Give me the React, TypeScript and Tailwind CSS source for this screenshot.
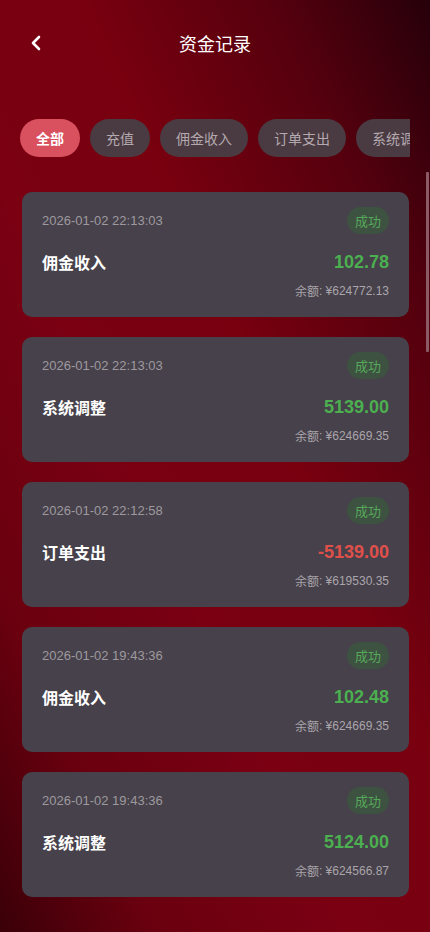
import React from "react";

type Rec = { time: string; title: string; amount: string; neg?: boolean; balance: string };

const records: Rec[] = [
  { time: "2026-01-02 22:13:03", title: "佣金收入", amount: "102.78", balance: "¥624772.13" },
  { time: "2026-01-02 22:13:03", title: "系统调整", amount: "5139.00", balance: "¥624669.35" },
  { time: "2026-01-02 22:12:58", title: "订单支出", amount: "-5139.00", neg: true, balance: "¥619530.35" },
  { time: "2026-01-02 19:43:36", title: "佣金收入", amount: "102.48", balance: "¥624669.35" },
  { time: "2026-01-02 19:43:36", title: "系统调整", amount: "5124.00", balance: "¥624566.87" },
];

const tabs = ["全部", "充值", "佣金收入", "订单支出", "系统调整"];

export default function App() {
  return (
    <div
      className="relative w-[430px] h-[932px] overflow-hidden bg-[linear-gradient(to_bottom_left,#26000a_0%,#55000e_18%,#78000f_40%,#7a0012_60%,#6a000f_82%,#3a0008_100%)]"
      style={{ fontFamily: '"Liberation Sans", Arial, "Noto Sans CJK SC", sans-serif' }}
    >
      {/* header */}
      <div className="relative h-[86px] flex items-center justify-center">
        <button className="absolute left-[26px] top-[33px] w-[20px] h-[20px] flex items-center justify-center">
          <svg width="12" height="16" viewBox="0 0 12 16" fill="none">
            <path d="M9 2L3 8L9 14" stroke="#ffffff" strokeWidth="2.6" strokeLinecap="round" strokeLinejoin="round" />
          </svg>
        </button>
        <div className="text-[18px] text-white" style={{ fontFamily: '"Noto Sans CJK SC", sans-serif' }}>
          资金记录
        </div>
      </div>

      {/* tabs */}
      <div className="mt-[33px] mx-[20px] overflow-hidden">
        <div className="flex gap-[10px] whitespace-nowrap">
          {tabs.map((t, i) => (
            <div
              key={t}
              className={
                i === 0
                  ? "shrink-0 h-[38px] px-[16px] rounded-full flex items-center text-[14px] font-bold text-white bg-[#d9505f]"
                  : "shrink-0 h-[38px] px-[16px] rounded-full flex items-center text-[14px] text-[#b3a9ae] bg-[#4a3a42]"
              }
              style={{ fontFamily: '"Noto Sans CJK SC", sans-serif' }}
            >
              {t}
            </div>
          ))}
        </div>
      </div>

      {/* list */}
      <div className="mt-[35px] ml-[22px] mr-[21px] flex flex-col gap-[20px]">
        {records.map((r, i) => (
          <div key={i} className="rounded-[10px] bg-[#46414a] px-[20px] pt-[15px] pb-[17px]">
            <div className="h-[27px] flex items-center justify-between">
              <span className="text-[13px] text-[#9e999f]">{r.time}</span>
              <span
                className="h-[27px] px-[8px] rounded-full flex items-center text-[13px] text-[#55a85a] bg-[#3e5241]"
                style={{ fontFamily: '"Noto Sans CJK SC", sans-serif' }}
              >
                成功
              </span>
            </div>
            <div className="mt-[16px] h-[24px] flex items-center justify-between">
              <span
                className="text-[16px] font-bold text-white"
                style={{ fontFamily: '"Noto Sans CJK SC", sans-serif' }}
              >
                {r.title}
              </span>
              <span className={r.neg ? "text-[18px] font-bold text-[#e0504a]" : "text-[18px] font-bold text-[#4caf50]"}>
                {r.amount}
              </span>
            </div>
            <div className="mt-[8px] h-[18px] flex items-center justify-end text-[12px] text-[#aaa5ab]">
              <span style={{ fontFamily: '"Noto Sans CJK SC", sans-serif' }}>余额</span>
              <span>: {r.balance}</span>
            </div>
          </div>
        ))}
      </div>

      {/* scrollbar */}
      <div className="absolute right-[1px] top-[172px] w-[3px] h-[180px] bg-[#8c5a64] rounded-[1px]" />
    </div>
  );
}
